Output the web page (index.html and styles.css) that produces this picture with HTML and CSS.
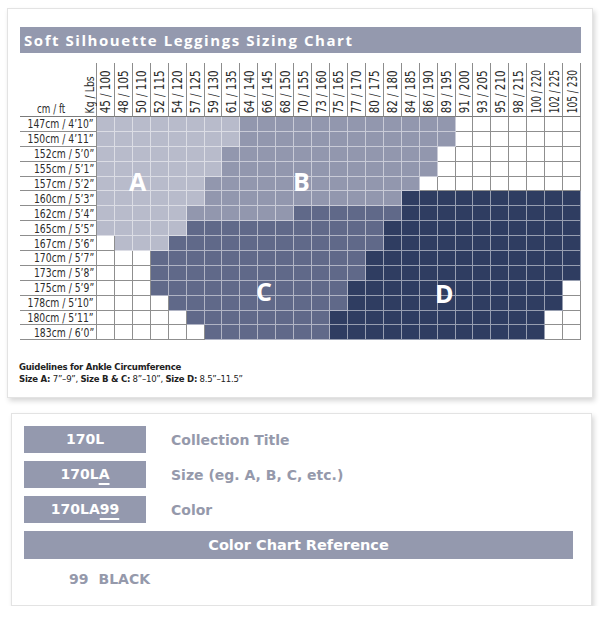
FILE: index.html
```html
<!DOCTYPE html>
<html>
<head>
<meta charset="utf-8">
<link rel="stylesheet" href="styles.css">
</head>
<body>
<div class="card chart-card">
  <div class="title-bar">Soft Silhouette Leggings Sizing Chart</div>
  <div class="chart-wrap">
    <div class="chart">
      <div class="corner"><span class="cmft">cm / ft</span><b class="kglbs"><span>Kg / Lbs</span></b></div>
      <div class="hcell"><b><span>45 / 100</span></b></div>
      <div class="hcell"><b><span>48 / 105</span></b></div>
      <div class="hcell"><b><span>50 / 110</span></b></div>
      <div class="hcell"><b><span>52 / 115</span></b></div>
      <div class="hcell"><b><span>54 / 120</span></b></div>
      <div class="hcell"><b><span>57 / 125</span></b></div>
      <div class="hcell"><b><span>59 / 130</span></b></div>
      <div class="hcell"><b><span>61 / 135</span></b></div>
      <div class="hcell"><b><span>64 / 140</span></b></div>
      <div class="hcell"><b><span>66 / 145</span></b></div>
      <div class="hcell"><b><span>68 / 150</span></b></div>
      <div class="hcell"><b><span>70 / 155</span></b></div>
      <div class="hcell"><b><span>73 / 160</span></b></div>
      <div class="hcell"><b><span>75 / 165</span></b></div>
      <div class="hcell"><b><span>77 / 170</span></b></div>
      <div class="hcell"><b><span>80 / 175</span></b></div>
      <div class="hcell"><b><span>82 / 180</span></b></div>
      <div class="hcell"><b><span>84 / 185</span></b></div>
      <div class="hcell"><b><span>86 / 190</span></b></div>
      <div class="hcell"><b><span>89 / 195</span></b></div>
      <div class="hcell"><b><span>91 / 200</span></b></div>
      <div class="hcell"><b><span>93 / 205</span></b></div>
      <div class="hcell"><b><span>95 / 210</span></b></div>
      <div class="hcell"><b><span>98 / 215</span></b></div>
      <div class="hcell long"><b><span>100 / 220</span></b></div>
      <div class="hcell long"><b><span>102 / 225</span></b></div>
      <div class="hcell long"><b><span>105 / 230</span></b></div>

      <div class="rl"><span>147cm / 4’10”</span></div>
      <i class="a"></i><i class="a"></i><i class="a"></i><i class="a"></i><i class="a"></i><i class="a"></i><i class="a"></i><i class="a"></i><i class="b"></i><i class="b"></i><i class="b"></i><i class="b"></i><i class="b"></i><i class="b"></i><i class="b"></i><i class="b"></i><i class="b"></i><i class="b"></i><i class="b"></i><i class="b"></i><i class="w"></i><i class="w"></i><i class="w"></i><i class="w"></i><i class="w"></i><i class="w"></i><i class="w"></i>
      <div class="rl"><span>150cm / 4’11”</span></div>
      <i class="a"></i><i class="a"></i><i class="a"></i><i class="a"></i><i class="a"></i><i class="a"></i><i class="a"></i><i class="a"></i><i class="b"></i><i class="b"></i><i class="b"></i><i class="b"></i><i class="b"></i><i class="b"></i><i class="b"></i><i class="b"></i><i class="b"></i><i class="b"></i><i class="b"></i><i class="b"></i><i class="w"></i><i class="w"></i><i class="w"></i><i class="w"></i><i class="w"></i><i class="w"></i><i class="w"></i>
      <div class="rl"><span>152cm / 5’0”</span></div>
      <i class="a"></i><i class="a"></i><i class="a"></i><i class="a"></i><i class="a"></i><i class="a"></i><i class="a"></i><i class="b"></i><i class="b"></i><i class="b"></i><i class="b"></i><i class="b"></i><i class="b"></i><i class="b"></i><i class="b"></i><i class="b"></i><i class="b"></i><i class="b"></i><i class="b"></i><i class="w"></i><i class="w"></i><i class="w"></i><i class="w"></i><i class="w"></i><i class="w"></i><i class="w"></i><i class="w"></i>
      <div class="rl"><span>155cm / 5’1”</span></div>
      <i class="a"></i><i class="a"></i><i class="a"></i><i class="a"></i><i class="a"></i><i class="a"></i><i class="a"></i><i class="b"></i><i class="b"></i><i class="b"></i><i class="b"></i><i class="b"></i><i class="b"></i><i class="b"></i><i class="b"></i><i class="b"></i><i class="b"></i><i class="b"></i><i class="b"></i><i class="w"></i><i class="w"></i><i class="w"></i><i class="w"></i><i class="w"></i><i class="w"></i><i class="w"></i><i class="w"></i>
      <div class="rl"><span>157cm / 5’2”</span></div>
      <i class="a"></i><i class="a"></i><i class="a"></i><i class="a"></i><i class="a"></i><i class="a"></i><i class="b"></i><i class="b"></i><i class="b"></i><i class="b"></i><i class="b"></i><i class="b"></i><i class="b"></i><i class="b"></i><i class="b"></i><i class="b"></i><i class="b"></i><i class="b"></i><i class="w"></i><i class="w"></i><i class="w"></i><i class="w"></i><i class="w"></i><i class="w"></i><i class="w"></i><i class="w"></i><i class="w"></i>
      <div class="rl"><span>160cm / 5’3”</span></div>
      <i class="a"></i><i class="a"></i><i class="a"></i><i class="a"></i><i class="a"></i><i class="a"></i><i class="b"></i><i class="b"></i><i class="b"></i><i class="b"></i><i class="b"></i><i class="b"></i><i class="b"></i><i class="b"></i><i class="b"></i><i class="b"></i><i class="b"></i><i class="d"></i><i class="d"></i><i class="d"></i><i class="d"></i><i class="d"></i><i class="d"></i><i class="d"></i><i class="d"></i><i class="d"></i><i class="d"></i>
      <div class="rl"><span>162cm / 5’4”</span></div>
      <i class="a"></i><i class="a"></i><i class="a"></i><i class="a"></i><i class="a"></i><i class="b"></i><i class="b"></i><i class="b"></i><i class="b"></i><i class="b"></i><i class="b"></i><i class="c"></i><i class="c"></i><i class="c"></i><i class="c"></i><i class="c"></i><i class="c"></i><i class="d"></i><i class="d"></i><i class="d"></i><i class="d"></i><i class="d"></i><i class="d"></i><i class="d"></i><i class="d"></i><i class="d"></i><i class="d"></i>
      <div class="rl"><span>165cm / 5’5”</span></div>
      <i class="a"></i><i class="a"></i><i class="a"></i><i class="a"></i><i class="a"></i><i class="c"></i><i class="c"></i><i class="c"></i><i class="c"></i><i class="c"></i><i class="c"></i><i class="c"></i><i class="c"></i><i class="c"></i><i class="c"></i><i class="c"></i><i class="d"></i><i class="d"></i><i class="d"></i><i class="d"></i><i class="d"></i><i class="d"></i><i class="d"></i><i class="d"></i><i class="d"></i><i class="d"></i><i class="d"></i>
      <div class="rl"><span>167cm / 5’6”</span></div>
      <i class="w"></i><i class="a"></i><i class="a"></i><i class="a"></i><i class="c"></i><i class="c"></i><i class="c"></i><i class="c"></i><i class="c"></i><i class="c"></i><i class="c"></i><i class="c"></i><i class="c"></i><i class="c"></i><i class="c"></i><i class="c"></i><i class="d"></i><i class="d"></i><i class="d"></i><i class="d"></i><i class="d"></i><i class="d"></i><i class="d"></i><i class="d"></i><i class="d"></i><i class="d"></i><i class="d"></i>
      <div class="rl"><span>170cm / 5’7”</span></div>
      <i class="w"></i><i class="w"></i><i class="w"></i><i class="c"></i><i class="c"></i><i class="c"></i><i class="c"></i><i class="c"></i><i class="c"></i><i class="c"></i><i class="c"></i><i class="c"></i><i class="c"></i><i class="c"></i><i class="c"></i><i class="d"></i><i class="d"></i><i class="d"></i><i class="d"></i><i class="d"></i><i class="d"></i><i class="d"></i><i class="d"></i><i class="d"></i><i class="d"></i><i class="d"></i><i class="d"></i>
      <div class="rl"><span>173cm / 5’8”</span></div>
      <i class="w"></i><i class="w"></i><i class="w"></i><i class="c"></i><i class="c"></i><i class="c"></i><i class="c"></i><i class="c"></i><i class="c"></i><i class="c"></i><i class="c"></i><i class="c"></i><i class="c"></i><i class="c"></i><i class="c"></i><i class="d"></i><i class="d"></i><i class="d"></i><i class="d"></i><i class="d"></i><i class="d"></i><i class="d"></i><i class="d"></i><i class="d"></i><i class="d"></i><i class="d"></i><i class="d"></i>
      <div class="rl"><span>175cm / 5’9”</span></div>
      <i class="w"></i><i class="w"></i><i class="w"></i><i class="c"></i><i class="c"></i><i class="c"></i><i class="c"></i><i class="c"></i><i class="c"></i><i class="c"></i><i class="c"></i><i class="c"></i><i class="c"></i><i class="c"></i><i class="d"></i><i class="d"></i><i class="d"></i><i class="d"></i><i class="d"></i><i class="d"></i><i class="d"></i><i class="d"></i><i class="d"></i><i class="d"></i><i class="d"></i><i class="d"></i><i class="w"></i>
      <div class="rl"><span>178cm / 5’10”</span></div>
      <i class="w"></i><i class="w"></i><i class="w"></i><i class="w"></i><i class="c"></i><i class="c"></i><i class="c"></i><i class="c"></i><i class="c"></i><i class="c"></i><i class="c"></i><i class="c"></i><i class="c"></i><i class="c"></i><i class="d"></i><i class="d"></i><i class="d"></i><i class="d"></i><i class="d"></i><i class="d"></i><i class="d"></i><i class="d"></i><i class="d"></i><i class="d"></i><i class="d"></i><i class="d"></i><i class="w"></i>
      <div class="rl"><span>180cm / 5’11”</span></div>
      <i class="w"></i><i class="w"></i><i class="w"></i><i class="w"></i><i class="w"></i><i class="c"></i><i class="c"></i><i class="c"></i><i class="c"></i><i class="c"></i><i class="c"></i><i class="c"></i><i class="c"></i><i class="d"></i><i class="d"></i><i class="d"></i><i class="d"></i><i class="d"></i><i class="d"></i><i class="d"></i><i class="d"></i><i class="d"></i><i class="d"></i><i class="d"></i><i class="d"></i><i class="w"></i><i class="w"></i>
      <div class="rl"><span>183cm / 6’0”</span></div>
      <i class="w"></i><i class="w"></i><i class="w"></i><i class="w"></i><i class="w"></i><i class="w"></i><i class="c"></i><i class="c"></i><i class="c"></i><i class="c"></i><i class="c"></i><i class="c"></i><i class="c"></i><i class="d"></i><i class="d"></i><i class="d"></i><i class="d"></i><i class="d"></i><i class="d"></i><i class="d"></i><i class="d"></i><i class="d"></i><i class="d"></i><i class="d"></i><i class="d"></i><i class="w"></i><i class="w"></i>
    </div>
    <span class="zone zone-a">A</span>
    <span class="zone zone-b">B</span>
    <span class="zone zone-c">C</span>
    <span class="zone zone-d">D</span>
  </div>
  <div class="guide">
    <div class="guide-title">Guidelines for Ankle Circumference</div>
    <div class="guide-line"><b>Size A:</b> 7”–9”, <b>Size B &amp; C:</b> 8”–10”, <b>Size D:</b> 8.5”–11.5”</div>
  </div>
</div>

<div class="card code-card">
  <div class="code-row"><div class="code">170L</div><div class="code-label">Collection Title</div></div>
  <div class="code-row"><div class="code">170L<u>A</u></div><div class="code-label">Size (eg. A, B, C, etc.)</div></div>
  <div class="code-row"><div class="code">170LA<u>99</u></div><div class="code-label">Color</div></div>
  <div class="ref-bar">Color Chart Reference</div>
  <div class="color-item"><span>99</span><span>BLACK</span></div>
</div>
</body>
</html>
```

FILE: styles.css
```css
* { box-sizing: border-box; }
body {
  margin: 0;
  background: #fff;
  font-family: "DejaVu Sans", sans-serif;
}
.card {
  background: #fff;
  border: 1px solid #e3e3e3;
  box-shadow: 2px 3px 5px rgba(0, 0, 0, 0.16);
}
.chart-card {
  margin: 8px 0 0 7px;
  width: 586px;
  height: 390px;
  padding: 18px 0 0 12px;
}
.title-bar {
  width: 561px;
  height: 26px;
  background: #9499ae;
  color: #fff;
  font-family: "Open Sans", sans-serif;
  font-weight: 700;
  font-size: 15px;
  letter-spacing: 1.55px;
  line-height: 26px;
  padding-left: 4px;
  white-space: nowrap;
}
.chart-wrap {
  position: relative;
  margin-top: 10px;
  width: 561px;
}
.chart {
  display: grid;
  grid-template-columns: 77px repeat(27, 1fr);
  grid-template-rows: 54px repeat(15, 14.9px);
  font-family: "DejaVu Sans Condensed", "DejaVu Sans", sans-serif;
  font-stretch: condensed;
  color: #2b2b2b;
}
.corner {
  display: flex;
  justify-content: space-between;
  align-items: flex-end;
  border-right: 1px solid #8d8d8d;
  border-bottom: 1px solid #7a7a7a;
}
.cmft {
  margin-left: 17px;
  font-size: 13px;
  line-height: 15px;
  white-space: nowrap;
  transform: scaleX(0.75);
  transform-origin: left center;
}
.kglbs {
  display: block;
  margin: 0 0 3px 0;
  font-weight: 400;
  transform-origin: 50% 100%;
  transform: scaleY(0.8);
}
.kglbs span {
  display: block;
  writing-mode: vertical-rl;
  transform: rotate(180deg);
  font-size: 13px;
  line-height: 13px;
  white-space: nowrap;
}
.hcell {
  display: flex;
  justify-content: center;
  align-items: flex-end;
  border-right: 1px solid #8d8d8d;
  border-bottom: 1px solid #7a7a7a;
  padding-bottom: 3px;
}
.hcell b {
  display: block;
  font-weight: 400;
  transform-origin: 50% 100%;
  transform: scaleY(0.82);
}
.hcell.long b { transform: scaleY(0.72); }
.hcell span {
  display: block;
  writing-mode: vertical-rl;
  transform: rotate(180deg);
  font-size: 14px;
  line-height: 16px;
  white-space: nowrap;
}
.rl {
  display: flex;
  justify-content: flex-end;
  align-items: center;
  font-size: 13px;
  padding-right: 2px;
  border-right: 1px solid #8d8d8d;
  border-bottom: 1px solid #8d8d8d;
  white-space: nowrap;
}
.rl span {
  display: block;
  transform: scaleX(0.79);
  transform-origin: right center;
}
.chart i {
  display: block;
  border-right: 1px solid rgba(255, 255, 255, 0.5);
  border-bottom: 1px solid rgba(255, 255, 255, 0.5);
}
.chart i.w { background: #fff; border-color: #8f8f8f; }
.chart i.a { background: #b8bbcb; }
.chart i.b { background: #9297ae; }
.chart i.c { background: #606989; }
.chart i.d { background: #2f3d61; }
.zone {
  position: absolute;
  color: #fff;
  font-family: "Open Sans", sans-serif;
  font-weight: 700;
  font-size: 25px;
  line-height: 25px;
}
.zone-a { left: 109px; top: 106px; }
.zone-b { left: 273px; top: 106px; }
.zone-c { left: 236px; top: 216px; }
.zone-d { left: 415px; top: 218px; }

.guide {
  margin-top: 21px;
  margin-left: -1px;
  font-family: "DejaVu Sans Condensed", "DejaVu Sans", sans-serif;
  font-stretch: condensed;
  font-size: 9.5px;
  letter-spacing: -0.25px;
  line-height: 12px;
  color: #222;
}
.guide-title { font-weight: 700; }

.code-card {
  margin: 15px 0 0 11px;
  width: 581px;
  height: 193px;
  padding: 12px 0 0 12px;
}
.code-row {
  display: flex;
  align-items: center;
  gap: 25px;
  margin-bottom: 8px;
}
.code {
  width: 122px;
  height: 27px;
  background: #9499ae;
  color: #fff;
  font-weight: 700;
  font-size: 14px;
  line-height: 27px;
  text-align: center;
}
.code u {
  text-decoration: underline;
  text-decoration-thickness: 2px;
  text-underline-offset: 4px;
}
.code-label {
  color: #9599ab;
  font-weight: 700;
  font-size: 14px;
}
.ref-bar {
  width: 549px;
  height: 28px;
  background: #9499ae;
  color: #fff;
  font-weight: 700;
  font-size: 14.5px;
  line-height: 28px;
  text-align: center;
  margin-top: 2px;
}
.color-item {
  display: flex;
  gap: 10px;
  margin: 12px 0 0 45px;
  color: #9599ab;
  font-weight: 700;
  font-size: 14px;
}
```
